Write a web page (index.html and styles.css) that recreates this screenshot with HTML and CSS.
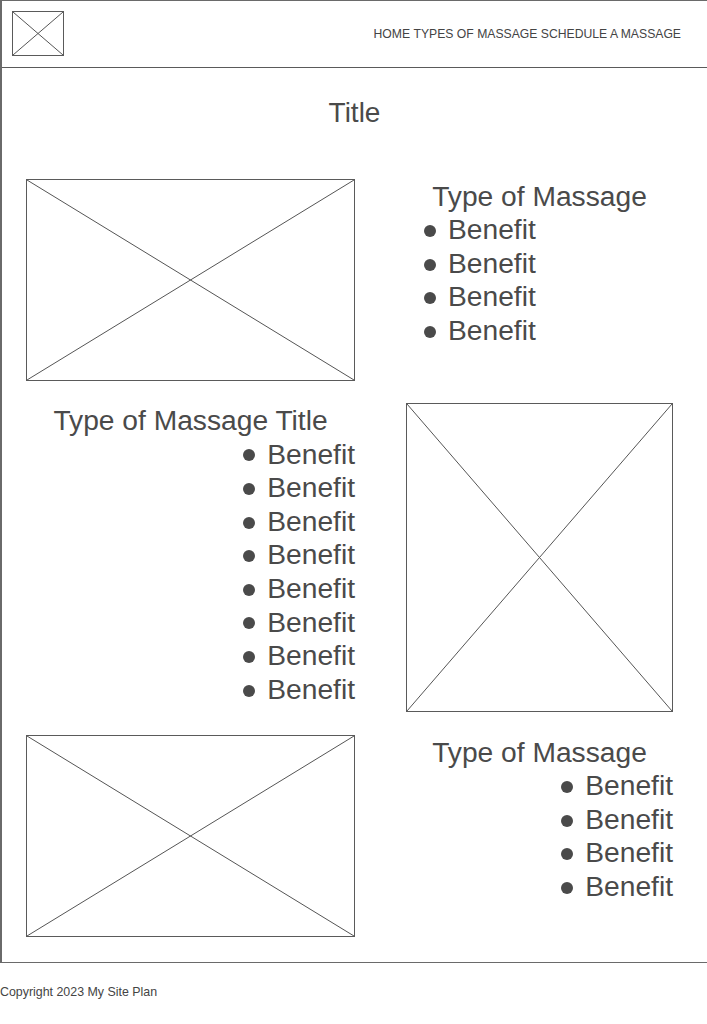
FILE: index.html
```html
<!DOCTYPE html>
<html lang="en">
<head>
<meta charset="UTF-8">
<meta name="viewport" content="width=device-width, initial-scale=1.0">
<title>Massage Site Plan</title>
<link rel="stylesheet" href="styles.css">
</head>
<body>

<div class="frame">
  <header class="topbar">
    <div class="box logo">
      <svg viewBox="0 0 100 100" preserveAspectRatio="none"><line x1="0" y1="0" x2="100" y2="100"/><line x1="100" y1="0" x2="0" y2="100"/></svg>
    </div>
    <nav class="menu">
      <a href="#home">HOME</a>
      <a href="#types">TYPES OF MASSAGE</a>
      <a href="#schedule">SCHEDULE A MASSAGE</a>
    </nav>
  </header>

  <main class="content">
    <h1 class="title">Title</h1>

    <!-- first massage: picture left, text right -->
    <section class="row">
      <div class="box pic-wide">
        <svg viewBox="0 0 100 100" preserveAspectRatio="none"><line x1="0" y1="0" x2="100" y2="100"/><line x1="100" y1="0" x2="0" y2="100"/></svg>
      </div>
      <div class="info">
        <h2>Type of Massage</h2>
        <ul class="benefits left">
          <li>Benefit</li>
          <li>Benefit</li>
          <li>Benefit</li>
          <li>Benefit</li>
        </ul>
      </div>
    </section>

    <!-- second massage: text left, picture right -->
    <section class="row">
      <div class="info">
        <h2>Type of Massage Title</h2>
        <ul class="benefits right">
          <li>Benefit</li>
          <li>Benefit</li>
          <li>Benefit</li>
          <li>Benefit</li>
          <li>Benefit</li>
          <li>Benefit</li>
          <li>Benefit</li>
          <li>Benefit</li>
        </ul>
      </div>
      <div class="box pic-tall">
        <svg viewBox="0 0 100 100" preserveAspectRatio="none"><line x1="0" y1="0" x2="100" y2="100"/><line x1="100" y1="0" x2="0" y2="100"/></svg>
      </div>
    </section>

    <!-- third massage -->
    <section class="row">
      <div class="box pic-wide">
        <svg viewBox="0 0 100 100" preserveAspectRatio="none"><line x1="0" y1="0" x2="100" y2="100"/><line x1="100" y1="0" x2="0" y2="100"/></svg>
      </div>
      <div class="info">
        <h2>Type of Massage</h2>
        <ul class="benefits right">
          <li>Benefit</li>
          <li>Benefit</li>
          <li>Benefit</li>
          <li>Benefit</li>
        </ul>
      </div>
    </section>
  </main>
</div>

<footer class="copy">Copyright 2023 My Site Plan</footer>

</body>
</html>
```

FILE: styles.css
```css
/* Wireframe for the massage site */
body {
  font-family: "Liberation Sans", Arial, sans-serif;
  margin: 0;
  padding: 0;
  background-color: #fff;
  color: #4a4a4a;
}
.frame {
  border-left: 2px solid #6a6a6a;
  border-top: 1px solid #6a6a6a;
  border-bottom: 1px solid #6a6a6a;
}
.topbar {
  height: 66px;
  display: flex;
  align-items: center;
  justify-content: space-between;
  padding: 0 26px 0 10px;
  border-bottom: 1px solid #5a5a5a;
}
.menu {
  font-size: 12.2px;
  display: flex;
  gap: 3.4px;
}
.menu a {
  color: #444;
  text-decoration: none;
}

/* crossed placeholder boxes */
.box {
  box-sizing: border-box;
  border: 1px solid #5a5a5a;
}
.box svg {
  display: block;
  width: 100%;
  height: 100%;
}
.box line {
  stroke: #555;
  stroke-width: 1;
  vector-effect: non-scaling-stroke;
}
.logo {
  width: 52px;
  height: 45px;
  margin-top: -1px;
}
.pic-wide {
  height: 202px;
}
.pic-tall {
  height: 309px;
}

.content {
  padding: 28px 0 25px;
}
.title {
  margin: 0 0 49px;
  font-size: 28px;
  font-weight: normal;
  line-height: 33.6px;
  text-align: center;
}
.row {
  display: grid;
  grid-template-columns: 329px 267px;
  column-gap: 51px;
  align-items: start;
  padding-left: 24px;
  margin-bottom: 22.5px;
}
.row:last-child {
  margin-bottom: 0;
}
.info {
  padding-top: 1px;
}
.info h2 {
  margin: 0;
  font-size: 28.2px;
  font-weight: normal;
  line-height: 33.6px;
  text-align: center;
}
.benefits {
  list-style: none;
  margin: 0;
  padding: 0;
  font-size: 28.2px;
  line-height: 33.6px;
  display: flex;
  flex-direction: column;
}
.benefits.left {
  padding-left: 18px;
  align-items: flex-start;
}
.benefits.right {
  align-items: flex-end;
}
.benefits li {
  display: flex;
  align-items: center;
  gap: 12px;
}
.benefits li::before {
  content: '';
  width: 12px;
  height: 12px;
  border-radius: 50%;
  background-color: #4a4a4a;
  margin-top: 2px;
}

.copy {
  margin-top: 22px;
  font-size: 12.4px;
  color: #444;
}
```
